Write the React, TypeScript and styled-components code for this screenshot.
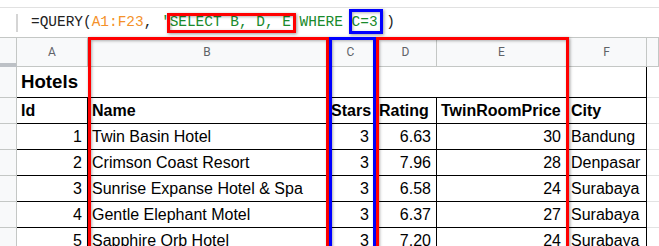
import React from "react";
import styled, { createGlobalStyle } from "styled-components";

const GlobalStyle = createGlobalStyle`
  html, body {
    margin: 0;
    padding: 0;
    background: #fff;
  }
  body {
    overflow: hidden;
  }
`;

const Sheet = styled.div`
  position: relative;
  width: 659px;
  height: 246px;
  overflow: hidden;
  background: #fff;
`;

const TopStrip = styled.div`
  height: 8px;
  box-sizing: border-box;
  border-bottom: 1px solid #e1e1e1;
`;

const FormulaBar = styled.div`
  height: 30px;
  box-sizing: border-box;
  display: flex;
  align-items: center;
  border-bottom: 1px solid #c4c7c5;
`;

const BarDivider = styled.div`
  width: 2px;
  height: 18px;
  margin-left: 16px;
  background: #d5d5d5;
`;

const Formula = styled.div`
  margin-left: 13px;
  margin-top: -2px;
  font-family: "Liberation Mono", "DejaVu Sans Mono", monospace;
  font-size: 14.45px;
  color: #222;
  white-space: pre;
`;

const Token = styled.span<{ $kind?: "range" | "string" }>`
  color: ${({ $kind }) =>
    $kind === "range" ? "#f4912a" : $kind === "string" ? "#198a2b" : "#222"};
`;

const Grid = styled.div`
  display: grid;
  grid-template-columns: 17px 71px 239px 48px 62px 130px 80px 12px;
  grid-template-rows: 29px 31px repeat(5, 26px);
`;

const ColHead = styled.div<{ $corner?: boolean }>`
  box-sizing: border-box;
  background: #f8f9fa;
  border-right: 1px solid #c4c7c5;
  border-bottom: ${({ $corner }) => ($corner ? "4px solid #bdc1c6" : "1px solid #c4c7c5")};
  display: flex;
  align-items: center;
  justify-content: center;
  font-family: Roboto, "Liberation Sans", sans-serif;
  font-size: 12px;
  color: #5f6368;
`;

const RowHead = styled.div`
  box-sizing: border-box;
  background: #f8f9fa;
  border-right: 1px solid #c4c7c5;
  border-bottom: 1px solid #c4c7c5;
`;

const Cell = styled.div<{ $align?: "left" | "right"; $bold?: boolean; $span?: number; $plain?: boolean }>`
  box-sizing: border-box;
  grid-column: span ${({ $span }) => $span ?? 1};
  border-right: ${({ $plain }) => ($plain ? "none" : "1px solid #000")};
  border-bottom: 1px solid ${({ $plain }) => ($plain ? "#e2e3e3" : "#000")};
  padding: 0 5px 0 4px;
  font-family: "Liberation Sans", Arial, sans-serif;
  font-size: 16px;
  font-weight: ${({ $bold }) => ($bold ? 700 : 400)};
  line-height: 25px;
  text-align: ${({ $align }) => $align ?? "left"};
  color: #000;
  white-space: nowrap;
  overflow: hidden;
`;

const TitleCell = styled(Cell)`
  font-size: 18.67px;
  line-height: 30px;
`;

const Mark = styled.div<{ $color: string; $x: number; $y: number; $w: number; $h: number }>`
  position: absolute;
  left: ${({ $x }) => $x}px;
  top: ${({ $y }) => $y}px;
  width: ${({ $w }) => $w}px;
  height: ${({ $h }) => $h}px;
  box-sizing: border-box;
  border: 3px solid ${({ $color }) => $color};
  box-shadow: 1px 1px 3px rgba(0, 0, 0, 0.4), inset 1px 1px 3px rgba(0, 0, 0, 0.3);
  pointer-events: none;
`;

const columns = ["A", "B", "C", "D", "E", "F", ""];

const headers = ["Id", "Name", "Stars", "Rating", "TwinRoomPrice", "City"];

const hotels = [
  ["1", "Twin Basin Hotel", "3", "6.63", "30", "Bandung"],
  ["2", "Crimson Coast Resort", "3", "7.96", "28", "Denpasar"],
  ["3", "Sunrise Expanse Hotel & Spa", "3", "6.58", "24", "Surabaya"],
  ["4", "Gentle Elephant Motel", "3", "6.37", "27", "Surabaya"],
  ["5", "Sapphire Orb Hotel", "3", "7.20", "24", "Surabaya"],
];

const numeric = [true, false, true, true, true, false];

export default function App() {
  return (
    <Sheet>
      <GlobalStyle />
      <TopStrip />
      <FormulaBar>
        <BarDivider />
        <Formula>
          <Token>=QUERY(</Token>
          <Token $kind="range">A1:F23</Token>
          <Token>, </Token>
          <Token $kind="string">'SELECT B, D, E WHERE C=3'</Token>
          <Token>)</Token>
        </Formula>
      </FormulaBar>
      <Grid>
        <ColHead $corner />
        {columns.map((c, i) => (
          <ColHead key={i}>{c}</ColHead>
        ))}

        <RowHead />
        <TitleCell $bold $span={6}>Hotels</TitleCell>
        <Cell $plain />

        <RowHead />
        {headers.map((h) => (
          <Cell key={h} $bold>
            {h}
          </Cell>
        ))}
        <Cell $plain />

        {hotels.map((row) => (
          <React.Fragment key={row[0]}>
            <RowHead />
            {row.map((v, i) => (
              <Cell key={i} $align={numeric[i] ? "right" : "left"}>
                {v}
              </Cell>
            ))}
            <Cell $plain />
          </React.Fragment>
        ))}
      </Grid>

      <Mark $color="#ff0000" $x={167} $y={13} $w={129} $h={20} />
      <Mark $color="#0000ff" $x={349} $y={9} $w={34} $h={25} />
      <Mark $color="#ff0000" $x={88} $y={37} $w={241} $h={260} />
      <Mark $color="#0000ff" $x={329} $y={37} $w={47} $h={260} />
      <Mark $color="#ff0000" $x={376} $y={37} $w={193} $h={260} />
    </Sheet>
  );
}
